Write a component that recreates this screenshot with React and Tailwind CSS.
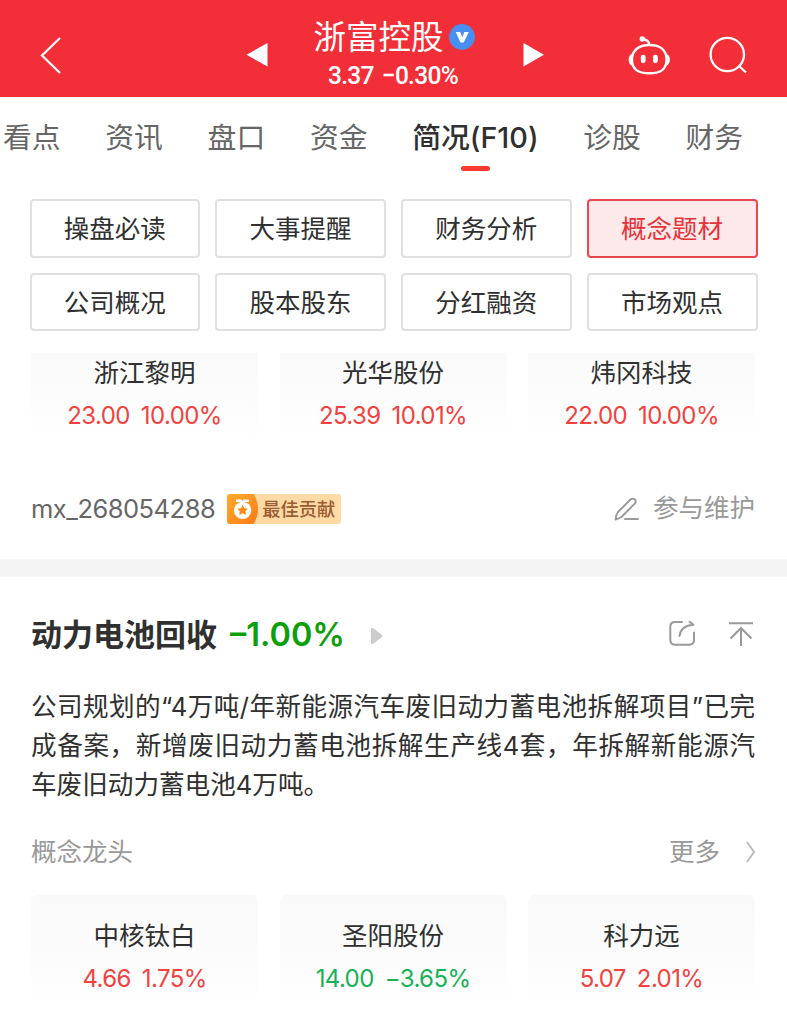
import React, { useState } from 'react';

const tabs = ['看点', '资讯', '盘口', '资金', '简况(F10)', '诊股', '财务'];

const sections = ['操盘必读', '大事提醒', '财务分析', '概念题材', '公司概况', '股本股东', '分红融资', '市场观点'];

const previousLeaders = [
  { name: '浙江黎明', price: '23.00', change: '10.00%', up: true },
  { name: '光华股份', price: '25.39', change: '10.01%', up: true },
  { name: '炜冈科技', price: '22.00', change: '10.00%', up: true },
];

const leaders = [
  { name: '中核钛白', price: '4.66', change: '1.75%', up: true },
  { name: '圣阳股份', price: '14.00', change: '−3.65%', up: false },
  { name: '科力远', price: '5.07', change: '2.01%', up: true },
];

const BackIcon = () => (
  <svg width="22" height="38" viewBox="0 0 22 38" fill="none" stroke="#fff" strokeWidth="2.2">
    <path d="M20 2 L2 19.5 L20 37" />
  </svg>
);

const VerifiedIcon = () => (
  <svg width="26" height="26" viewBox="0 0 26 26">
    <circle cx="13" cy="13" r="12.9" fill="#4790ef" />
    <path d="M6.7 8 H11.2 L13.4 13.2 L15.3 8 H19.8 L14.7 18.5 H11.5 Z" fill="#fff" />
  </svg>
);

const RobotIcon = () => (
  <svg width="44" height="40" viewBox="0 0 44 40" fill="none" stroke="#fff" strokeWidth="2.4">
    <path d="M22.5 9 C33 9 39.5 14 39.5 23.5 C39.5 33.5 34 37.3 22.5 37.3 C11 37.3 5 33.5 5 23.5 C5 14 12 9 22.5 9 Z" />
    <path d="M5.2 19 C2 20.500 2 27 5.500 28.800 M39.300 19 C42.500 20.500 42.500 27 39 28.800" />
    <path d="M22.500 9 C22 5 20 3.500 15.500 3.200" />
    <circle cx="15.300" cy="3" r="2.700" fill="#fff" stroke="none" />
    <rect x="13.800" y="18.700" width="4.800" height="8.500" rx="2.400" fill="#fff" stroke="none" />
    <rect x="26" y="18.700" width="4.800" height="8.500" rx="2.400" fill="#fff" stroke="none" />
  </svg>
);

const SearchIcon = () => (
  <svg width="38" height="38" viewBox="0 0 38 38" fill="none" stroke="#fff" strokeWidth="2.3">
    <circle cx="18.3" cy="18.5" r="16.7" />
    <path d="M29.5 29.5 L37 36.5" />
  </svg>
);

const MedalIcon = () => (
  <svg width="32" height="30" viewBox="0 0 32 30">
    <defs>
      <linearGradient id="medal" x1="0" y1="0" x2="1" y2="1">
        <stop offset="0" stopColor="#ffab2e" />
        <stop offset="1" stopColor="#fc7a14" />
      </linearGradient>
    </defs>
    <path d="M2 0 H26.5 Q31 7 31 15 Q31 23 26.5 30 H2 Q0 30 0 28 V2 Q0 0 2 0 Z" fill="url(#medal)" />
    <path d="M9 5.5 H14.5 L15.5 7 L16.5 5.5 H22 V8 H9 Z" fill="#fff" />
    <circle cx="15.6" cy="16.3" r="8.6" fill="#fff" />
    <path d="M15.6 10.7 L17.3 14.2 L21.1 14.7 L18.3 17.3 L19 21.1 L15.6 19.3 L12.2 21.1 L12.900 17.300 L10.100 14.700 L13.900 14.200 Z" fill="#fd8a1c" />
  </svg>
);

const PencilIcon = () => (
  <svg width="26" height="24" viewBox="0 0 26 24" fill="none" stroke="#999" strokeWidth="1.9" strokeLinecap="round" strokeLinejoin="round">
    <path d="M1.5 22.5 Q2 17.5 4 15 L16.5 2.5 Q18.5 0.8 20.8 2.4 Q22.6 4.5 20.7 6.7 L8 19.5 Q5.5 21.5 1.5 22.5 Z" />
    <path d="M11 22 H24" />
  </svg>
);

const ShareIcon = () => (
  <svg width="27" height="27" viewBox="0 0 27 27" fill="none" stroke="#999" strokeWidth="2" strokeLinecap="round" strokeLinejoin="round">
    <path d="M13 2 H6 Q1.3 2 1.3 6.5 V20 Q1.3 24.7 6 24.7 H20.5 Q25 24.7 25 20 V12.5" />
    <path d="M10.5 16 Q11.5 6 24 4.7 M20.5 1.8 L24.5 4.7 L20.5 5.5" />
  </svg>
);

const TopIcon = () => (
  <svg width="26" height="26" viewBox="0 0 26 26" fill="none" stroke="#999" strokeWidth="2">
    <path d="M1 2.3 H25 M13 25 V6.5 M2.5 17.5 L13 7 L23.5 17.5" />
  </svg>
);

const StockCard = ({ stock, flush }) => (
  <div
    className={
      flush
        ? 'flex h-[93px] flex-col items-center bg-linear-to-b from-[#fafafa] to-white pt-1'
        : 'flex h-[117px] flex-col items-center rounded-t-md bg-linear-to-b from-[#f9f9f9] to-white pt-[25px]'
    }
  >
    <div className="text-[25.5px] leading-8">{stock.name}</div>
    <div
      className={`mt-[11px] flex gap-[11px] text-[24px] leading-8 tracking-[-0.6px] ${
        stock.up ? 'text-[#f2423d]' : 'text-[#16b255]'
      }`}
    >
      <span>{stock.price}</span>
      <span>{stock.change}</span>
    </div>
  </div>
);

const App = () => {
  const [activeTab, setActiveTab] = useState('简况(F10)');
  const [activeSection, setActiveSection] = useState('概念题材');

  return (
    <div className="h-[1024px] w-[787px] overflow-hidden bg-white font-['Inter','Noto_Sans_CJK_SC',sans-serif] text-[#303030]">
      <header className="flex h-[97px] bg-[#f22f38] text-white">
        <div className="w-[246px] pt-9 pl-10">
          <BackIcon />
        </div>
        <svg className="mt-[43px]" width="22" height="24" viewBox="0 0 22 24">
          <path d="M0.5 11.8 L21.5 0 V23.5 Z" fill="#fff" />
        </svg>
        <div className="flex w-[254px] flex-col items-center">
          <div className="mt-[17px] flex h-10 items-center gap-[5px] pr-[2px] whitespace-nowrap">
            <h1 className="mt-0.5 text-[32.5px] leading-10 font-normal">浙富控股</h1>
            <VerifiedIcon />
          </div>
          <div className="mt-1 flex scale-y-105 gap-2 pr-1 font-['Roboto',sans-serif] text-[24.5px] leading-[30px] font-medium tracking-[-0.7px]">
            <span>3.37</span>
            <span>−0.30%</span>
          </div>
        </div>
        <svg className="mt-[43px]" width="22" height="24" viewBox="0 0 22 24">
          <path d="M1.5 0 L22 11.8 L1.5 23.5 Z" fill="#fff" />
        </svg>
        <div className="mt-9 ml-[83px]">
          <RobotIcon />
        </div>
        <div className="mt-9 ml-[38px]">
          <SearchIcon />
        </div>
      </header>

      <nav className="flex h-[102px] gap-[44.7px] pt-[20px] pl-[3px] whitespace-nowrap">
        {tabs.map((tab) => (
          <button
            key={tab}
            onClick={() => setActiveTab(tab)}
            className={`flex shrink-0 flex-col items-center text-[28.8px] leading-[42px] ${
              tab === activeTab ? 'font-medium text-[#303030]' : 'text-[#666]'
            }`}
          >
            {tab}
            {tab === activeTab && <span className="mt-[7px] h-[5px] w-[29px] rounded-full bg-[#fb3a32]" />}
          </button>
        ))}
      </nav>

      <div className="grid grid-cols-4 gap-x-[15px] gap-y-[15px] pr-[29.5px] pl-[29.5px]">
        {sections.map((item) => (
          <button
            key={item}
            onClick={() => setActiveSection(item)}
            className={`h-[58.5px] rounded-[4px] border-2 pt-0.5 text-[25.5px] leading-8 ${
              item === activeSection ? 'border-[#e8484e] bg-[#fee9ea] text-[#e5333a]' : 'border-[#e0e0e0] bg-white'
            }`}
          >
            {item}
          </button>
        ))}
      </div>

      <div className="mt-[22px] grid grid-cols-3 gap-[21.5px] pr-8 pl-[31px]">
        {previousLeaders.map((stock) => (
          <StockCard key={stock.name} stock={stock} flush />
        ))}
      </div>

      <div className="mt-[42px] flex h-[42px] items-center pr-8 pl-[31px]">
        <span className="text-[25.5px] tracking-[-0.5px] text-[#666]">mx_268054288</span>
        <div className="ml-3 flex h-[30px] w-[114px] items-center overflow-hidden rounded-[3px] bg-[#ffdaa4]">
          <MedalIcon />
          <span className="mt-0.5 ml-[3px] text-[18.3px] font-medium whitespace-nowrap text-[#9a5c32]">最佳贡献</span>
        </div>
        <div className="ml-auto flex items-center gap-[13px] text-[#999]">
          <PencilIcon />
          <span className="-mt-0.5 text-[25.5px]">参与维护</span>
        </div>
      </div>

      <div className="mt-[29px] h-[18px] bg-[#f4f4f4]" />

      <section className="pr-8 pl-[31px]">
        <div className="flex items-center pt-[36px]">
          <h2 className="text-[31px] leading-[44px] font-bold">动力电池回收</h2>
          <span className="ml-[13px] text-[32.5px] leading-[44px] font-semibold text-[#0b9f0b]">–1.00%</span>
          <svg className="mt-0.5 ml-[26px]" width="12" height="18" viewBox="0 0 12 18">
            <path d="M0 2 Q0 0 2 1 L11 8 Q12 9 11 10 L2 17 Q0 18 0 16 Z" fill="#ccc" />
          </svg>
          <div className="-mt-[3px] ml-auto flex items-center gap-[32px] pr-px">
            <ShareIcon />
            <TopIcon />
          </div>
        </div>

        <p className="mt-[30px] text-justify text-[25.6px] leading-[39px]">
          公司规划的“4万吨/年新能源汽车废旧动力蓄电池拆解项目”已完成备案，新增废旧动力蓄电池拆解生产线4套，年拆解新能源汽车废旧动力蓄电池4万吨。
        </p>

        <div className="mt-[29px] flex h-[38px] items-center text-[25.5px] text-[#999]">
          <span>概念龙头</span>
          <span className="ml-auto">更多</span>
          <svg className="-mr-px ml-[25px]" width="11" height="24" viewBox="0 0 11 24" fill="none" stroke="#bbb" strokeWidth="2">
            <path d="M2 2 L9 12 L2 22" />
          </svg>
        </div>

        <div className="mt-6 grid grid-cols-3 gap-[21.5px]">
          {leaders.map((stock) => (
            <StockCard key={stock.name} stock={stock} />
          ))}
        </div>
      </section>
    </div>
  );
};

export default App;
